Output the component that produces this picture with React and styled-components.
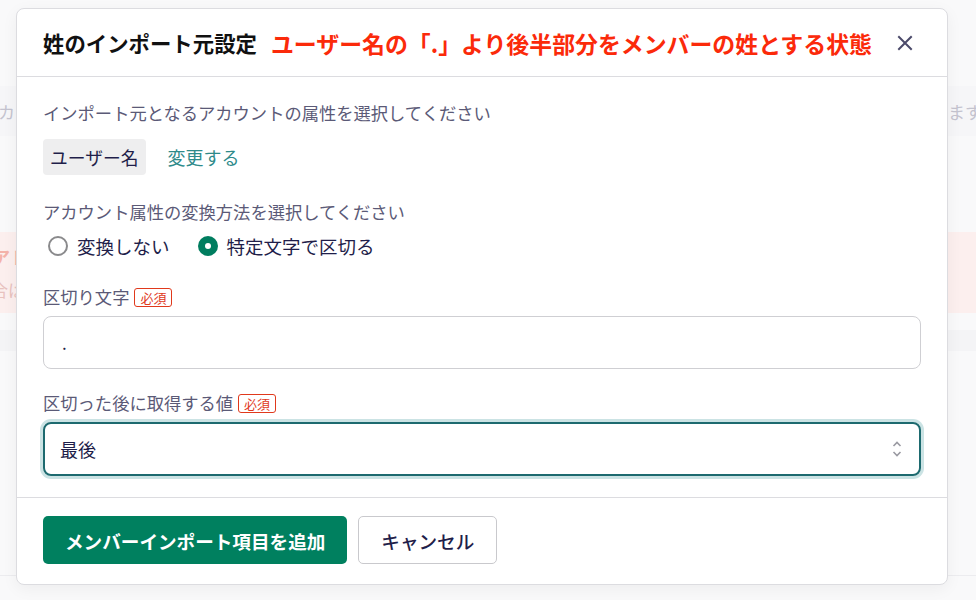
import React from "react";
import styled, { createGlobalStyle } from "styled-components";

const GlobalStyle = createGlobalStyle`
  html, body { margin: 0; padding: 0; }
  body {
    background: #f9f9fa;
    font-family: "Noto Sans CJK JP", "Noto Sans", sans-serif;
    color: #1f1e4a;
  }
  * { box-sizing: border-box; }
`;

const Page = styled.div`
  position: relative;
  width: 976px;
  height: 600px;
  overflow: hidden;
  display: flex;
  flex-direction: column;
`;

const BgIntro = styled.div`
  margin-top: 86px;
  height: 50px;
  background: #f6f6f8;
  display: flex;
  align-items: center;
  justify-content: space-between;
  font-size: 17px;
  color: #c4c3cf;
  white-space: nowrap;
`;

const BgText = styled.span`
  margin: ${(p) => p.$m || "0"};
`;

const BgAlert = styled.div`
  margin-top: 96px;
  height: 81px;
  background: #fcefee;
  display: flex;
  flex-direction: column;
  justify-content: center;
  gap: 8px;
  font-size: 17px;
  white-space: nowrap;
`;

const BgAlertLine = styled.span`
  color: ${(p) => p.$c};
  font-weight: ${(p) => p.$w || 400};
  margin-left: ${(p) => p.$ml};
`;

const BgBand = styled.div`
  margin-top: 17px;
  height: 21px;
  background: #f4f4f6;
`;

const BgFoot = styled.div`
  margin-top: auto;
  margin-bottom: 24px;
  border-top: 1px solid #ececef;
`;

const Modal = styled.div`
  position: absolute;
  left: 16px;
  top: 8px;
  width: 932px;
  background: #fff;
  border: 1px solid #dcdce0;
  border-radius: 8px;
  box-shadow: 0 4px 16px rgba(0, 0, 0, 0.05);
  display: flex;
  flex-direction: column;
`;

const Header = styled.div`
  height: 68px;
  display: flex;
  align-items: center;
  padding: 0 31px 0 26px;
  border-bottom: 1px solid #dcdce0;
  gap: 14px;
`;

const Title = styled.h2`
  margin: 0;
  font-size: 21.4px;
  font-weight: 700;
  color: #111;
  white-space: nowrap;
`;

const Note = styled.span`
  font-size: 22.9px;
  font-weight: 700;
  color: #fb2a0a;
  white-space: nowrap;
  flex: 1;
`;

const CloseButton = styled.button`
  border: none;
  background: none;
  padding: 0;
  width: 22px;
  height: 22px;
  display: flex;
  align-items: center;
  justify-content: center;
  cursor: pointer;
`;

const Body = styled.div`
  padding: 23px 26px 21px;
  display: flex;
  flex-direction: column;
  border-bottom: 1px solid #dcdce0;
`;

const Label = styled.div`
  font-size: 17.3px;
  line-height: 26px;
  color: #5b5a77;
  display: flex;
  align-items: center;
  gap: 5px;
  margin-top: ${(p) => p.$mt || "0"};
`;

const Badge = styled.span`
  font-size: 13px;
  line-height: 17px;
  padding: 0 5px;
  color: #e0391c;
  border: 1px solid #e0391c;
  border-radius: 3px;
`;

const ChipRow = styled.div`
  margin-top: 13px;
  display: flex;
  align-items: center;
  gap: 22px;
`;

const Chip = styled.span`
  background: #eeeeef;
  border-radius: 4px;
  height: 36px;
  padding: 0 7px;
  display: flex;
  align-items: center;
  font-size: 17.8px;
  color: #1f1e4a;
`;

const LinkButton = styled.a`
  font-size: 18px;
  color: #2e8a8a;
  text-decoration: none;
  cursor: pointer;
`;

const RadioRow = styled.div`
  margin-top: 8px;
  display: flex;
  align-items: center;
  gap: 28px;
  padding-left: 5px;
`;

const RadioItem = styled.label`
  display: flex;
  align-items: center;
  gap: 9px;
  font-size: 18.5px;
  line-height: 26px;
  color: #1f1e4a;
`;

const RadioCircle = styled.span`
  width: 20px;
  height: 20px;
  border-radius: 50%;
  display: flex;
  align-items: center;
  justify-content: center;
  border: ${(p) => (p.$checked ? "none" : "2px solid #8a8a8c")};
  background: ${(p) => (p.$checked ? "#007d5f" : "#fff")};
  &::after {
    content: "";
    display: ${(p) => (p.$checked ? "block" : "none")};
    width: 6px;
    height: 6px;
    border-radius: 50%;
    background: #fff;
  }
`;

const TextInput = styled.div`
  margin-top: 6px;
  height: 53px;
  border: 1px solid #cfcfd3;
  border-radius: 8px;
  display: flex;
  align-items: center;
  padding: 0 18px;
  font-size: 17px;
  color: #1f1e4a;
`;

const Select = styled.div`
  margin-top: 6px;
  height: 54px;
  border: 2px solid #1d6a6f;
  border-radius: 8px;
  box-shadow: 0 0 0 3px #cbe3e4;
  display: flex;
  align-items: center;
  justify-content: space-between;
  padding: 0 16px 0 15px;
  font-size: 18px;
  color: #1f1e4a;
`;

const Footer = styled.div`
  padding: 18px 26px 20px;
  display: flex;
  gap: 11px;
`;

const PrimaryButton = styled.button`
  height: 48px;
  padding: 0 22px;
  border: none;
  border-radius: 5px;
  background: #00805f;
  color: #fff;
  font-family: inherit;
  font-size: 18.6px;
  font-weight: 700;
  cursor: pointer;
`;

const SecondaryButton = styled.button`
  height: 48px;
  padding: 0 22px;
  border: 1px solid #c9c9cd;
  border-radius: 5px;
  background: #fff;
  color: #1f1e4a;
  font-family: inherit;
  font-size: 18.6px;
  font-weight: 500;
  cursor: pointer;
`;

const CloseIcon = () => (
  <svg width="16" height="16" viewBox="0 0 16 16" fill="none">
    <path d="M2 2L14 14M14 2L2 14" stroke="#4b4a6a" strokeWidth="2" strokeLinecap="square" />
  </svg>
);

const UpDownIcon = () => (
  <svg width="12" height="18" viewBox="0 0 12 18" fill="none">
    <path d="M2.5 6L6 2.5L9.5 6" stroke="#9a9aa2" strokeWidth="1.6" />
    <path d="M2.5 12L6 15.5L9.5 12" stroke="#9a9aa2" strokeWidth="1.6" />
  </svg>
);

export default function App() {
  return (
    <>
      <GlobalStyle />
      <Page>
        <BgIntro>
          <BgText $m="0 0 0 -2px">カ</BgText>
          <BgText $m="0 -6px 0 0">ます</BgText>
        </BgIntro>
        <BgAlert>
          <BgAlertLine $c="#f4b3aa" $w={700} $ml="-7px">アト</BgAlertLine>
          <BgAlertLine $c="#e8c2be" $ml="-9px">合は</BgAlertLine>
        </BgAlert>
        <BgBand />
        <BgFoot />

        <Modal>
          <Header>
            <Title>姓のインポート元設定</Title>
            <Note>ユーザー名の「.」より後半部分をメンバーの姓とする状態</Note>
            <CloseButton aria-label="閉じる">
              <CloseIcon />
            </CloseButton>
          </Header>
          <Body>
            <Label>インポート元となるアカウントの属性を選択してください</Label>
            <ChipRow>
              <Chip>ユーザー名</Chip>
              <LinkButton>変更する</LinkButton>
            </ChipRow>

            <Label $mt="24px">アカウント属性の変換方法を選択してください</Label>
            <RadioRow>
              <RadioItem>
                <RadioCircle />
                変換しない
              </RadioItem>
              <RadioItem>
                <RadioCircle $checked />
                特定文字で区切る
              </RadioItem>
            </RadioRow>

            <Label $mt="25px">
              区切り文字<Badge>必須</Badge>
            </Label>
            <TextInput>.</TextInput>

            <Label $mt="21px">
              区切った後に取得する値<Badge>必須</Badge>
            </Label>
            <Select>
              <span>最後</span>
              <UpDownIcon />
            </Select>
          </Body>
          <Footer>
            <PrimaryButton>メンバーインポート項目を追加</PrimaryButton>
            <SecondaryButton>キャンセル</SecondaryButton>
          </Footer>
        </Modal>
      </Page>
    </>
  );
}
